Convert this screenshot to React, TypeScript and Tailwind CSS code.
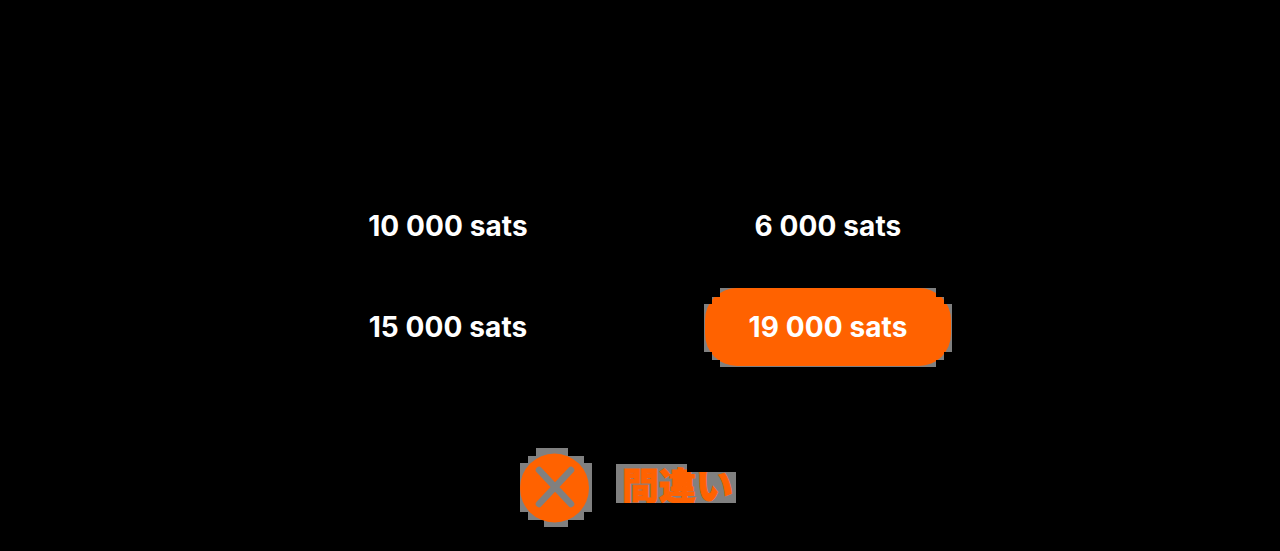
import React from 'react';

const amounts = [
  { label: '10 000 sats', active: false },
  { label: '6 000 sats', active: false },
  { label: '15 000 sats', active: false },
  { label: '19 000 sats', active: true },
];

const AmountCell = ({ label, active }: { label: string; active: boolean }) => {
  if (!active) {
    return (
      <div className="flex h-[79px] w-[248px] items-center justify-center pb-[2px] text-[28px] font-bold tracking-[0.1px] text-white">
        {label}
      </div>
    );
  }
  return (
    // Gray stair-stepped backing shows around the pill corners
    <div className="flex h-[79px] w-[248px] bg-[#808080] px-[1px] pb-[1px] [clip-path:polygon(16px_0,232px_0,232px_9px,240px_9px,240px_16px,248px_16px,248px_64px,240px_64px,240px_72px,232px_72px,232px_79px,16px_79px,16px_72px,8px_72px,8px_64px,0_64px,0_16px,8px_16px,8px_9px,16px_9px)]">
      <div className="flex flex-1 items-center justify-center rounded-[32px] bg-[#ff6200] text-[28px] font-bold tracking-[0.1px] text-white">
        {label}
      </div>
    </div>
  );
};

const CloseIcon = () => {
  return (
    <svg width="72" height="80" viewBox="0 0 72 80" className="block shrink-0">
      <rect x="16" y="0" width="32" height="8" fill="#808080" />
      <rect x="8" y="8" width="56" height="8" fill="#808080" />
      <rect x="0" y="15" width="72" height="49" fill="#808080" />
      <rect x="8" y="64" width="56" height="8" fill="#808080" />
      <rect x="24" y="72" width="24" height="7" fill="#808080" />
      <circle cx="34.5" cy="40" r="34.5" fill="#ff6200" />
      <path d="M19 22 L51 56 M51 22 L19 56" stroke="#808080" strokeWidth="6.5" strokeLinecap="round" />
    </svg>
  );
};

export default function App() {
  return (
    <div
      className="flex h-[551px] w-[1280px] flex-col overflow-hidden bg-black pl-[324px] pt-[187px]"
      style={{ fontFamily: 'Inter, "Noto Sans CJK JP", sans-serif' }}
    >
      <div className="grid w-[628px] grid-cols-[248px_248px] gap-x-[132px] gap-y-[22px]">
        {amounts.map((item) => (
          <AmountCell key={item.label} label={item.label} active={item.active} />
        ))}
      </div>

      {/* Cancel action */}
      <div className="ml-[196px] mt-[81px] flex items-start gap-[24px]">
        <CloseIcon />
        <div className="mt-[16px] h-[39px] w-[120px] bg-[#808080] pl-[6px] pt-[3px] [clip-path:polygon(0_0,71px_0,71px_8px,120px_8px,120px_39px,0_39px)]">
          <span className="block whitespace-nowrap text-[37px] font-black leading-[39px] text-[#ff6200] [-webkit-text-stroke:1px_#ff6200]">
            間違い
          </span>
        </div>
      </div>
    </div>
  );
}
